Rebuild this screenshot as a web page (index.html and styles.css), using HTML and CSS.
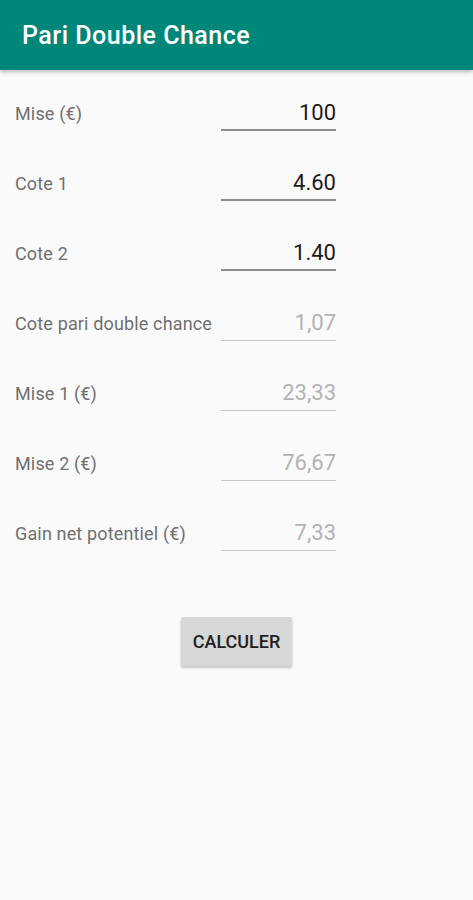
FILE: index.html
```html
<!DOCTYPE html>
<html lang="fr">

<head>
    <meta charset="UTF-8">
    <meta name="viewport" content="width=device-width, initial-scale=1.0">
    <title>Pari Double Chance</title>
    <link rel="stylesheet" href="styles.css">
</head>

<body>

    <header class="bar">Pari Double Chance</header>

    <main class="form">
        <div class="row">
            <span class="label">Mise (€)</span>
            <span class="field">100</span>
        </div>
        <div class="row">
            <span class="label">Cote 1</span>
            <span class="field">4.60</span>
        </div>
        <div class="row">
            <span class="label">Cote 2</span>
            <span class="field">1.40</span>
        </div>
        <div class="row">
            <span class="label">Cote pari double chance</span>
            <span class="field off">1,07</span>
        </div>
        <div class="row">
            <span class="label">Mise 1 (€)</span>
            <span class="field off">23,33</span>
        </div>
        <div class="row">
            <span class="label">Mise 2 (€)</span>
            <span class="field off">76,67</span>
        </div>
        <div class="row">
            <span class="label">Gain net potentiel (€)</span>
            <span class="field off">7,33</span>
        </div>

        <div class="actions">
            <button class="calc">CALCULER</button>
        </div>
    </main>

</body>

</html>
```

FILE: styles.css
```css
body {
    margin: 0;
    background: #fafafa;
    font-family: Roboto, "Noto Sans", sans-serif;
    height: 900px;
}

.bar {
    height: 70px;
    box-sizing: border-box;
    padding: 21px 22px 0;
    background: #00877a;
    color: #fff;
    font-size: 25px;
    font-weight: 500;
    letter-spacing: 0.5px;
    line-height: 30px;
    box-shadow: 0 2px 4px rgba(0, 0, 0, 0.25);
    position: relative;
}

.form {
    padding: 0 15px;
}

.row {
    height: 70px;
    box-sizing: border-box;
    padding-top: 29px;
    display: flex;
    align-items: baseline;
}

.label {
    width: 206px;
    font-size: 18px;
    letter-spacing: 0.15px;
    line-height: 28px;
    color: #707070;
}

.field {
    width: 115px;
    font-size: 22px;
    line-height: 28px;
    padding-bottom: 2px;
    text-align: right;
    color: #1c1c1c;
    border-bottom: 2px solid #8c8c8c;
}

.field.off {
    color: #b3b3b3;
    border-bottom: 1px solid #c8c8c8;
    padding-bottom: 3px;
}

.actions {
    display: flex;
    justify-content: center;
    padding-top: 57px;
}

.calc {
    width: 111px;
    height: 49px;
    border: none;
    border-radius: 2px;
    background: #d6d7d7;
    color: #1e1e1e;
    font-family: Roboto, "Noto Sans", sans-serif;
    font-size: 18px;
    font-weight: 500;
    box-shadow: 0 2px 3px rgba(0, 0, 0, 0.22);
}
```
